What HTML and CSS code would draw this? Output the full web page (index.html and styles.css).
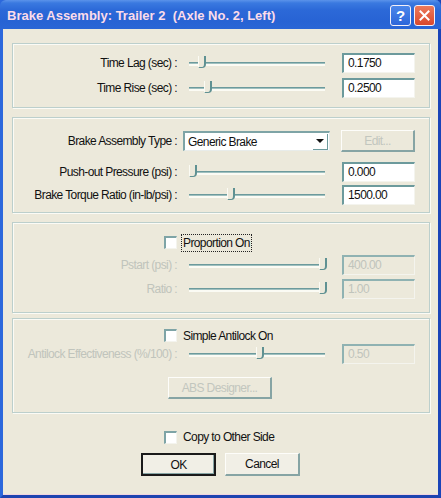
FILE: index.html
```html
<!DOCTYPE html>
<html lang="en">
<head>
  <meta charset="UTF-8">
  <title>Brake Assembly</title>
  <link rel="stylesheet" href="styles.css">
</head>
<body>

<div class="window">
  <div class="titlebar">
    <span class="title">Brake Assembly: Trailer 2&nbsp; (Axle No. 2, Left)</span>
    <div class="tb-buttons">
      <span class="tb-btn help">?</span>
      <span class="tb-btn close">
        <svg width="11" height="11" viewBox="0 0 11 11"><path d="M1.5 1.5 L9.5 9.5 M9.5 1.5 L1.5 9.5" stroke="#fff" stroke-width="2" stroke-linecap="square"/></svg>
      </span>
    </div>
  </div>

  <div class="client">

    <div class="group g1">
      <div class="row">
        <label class="lbl">Time Lag (sec) :</label>
        <div class="slider"><span class="thumb" style="left:8%"></span></div>
        <div class="field">0.1750</div>
      </div>
      <div class="row">
        <label class="lbl">Time Rise (sec) :</label>
        <div class="slider"><span class="thumb" style="left:12%"></span></div>
        <div class="field">0.2500</div>
      </div>
    </div>

    <div class="group g2">
      <div class="row combo-row">
        <label class="lbl">Brake Assembly Type :</label>
        <div class="combo">
          <span class="combo-text">Generic Brake</span>
          <span class="combo-btn"><span class="arrow"></span></span>
        </div>
        <div class="btn disabled edit">Edit...</div>
      </div>
      <div class="row">
        <label class="lbl">Push-out Pressure (psi) :</label>
        <div class="slider"><span class="thumb" style="left:2%"></span></div>
        <div class="field">0.000</div>
      </div>
      <div class="row">
        <label class="lbl">Brake Torque Ratio (in-lb/psi) :</label>
        <div class="slider"><span class="thumb" style="left:28%"></span></div>
        <div class="field">1500.00</div>
      </div>
    </div>

    <div class="group g3">
      <div class="check-row">
        <span class="checkbox"></span>
        <span class="check-label focus">Proportion On</span>
      </div>
      <div class="row dim">
        <label class="lbl">Pstart (psi) :</label>
        <div class="slider"><span class="thumb" style="left:90%"></span></div>
        <div class="field">400.00</div>
      </div>
      <div class="row dim">
        <label class="lbl">Ratio :</label>
        <div class="slider"><span class="thumb" style="left:90%"></span></div>
        <div class="field">1.00</div>
      </div>
    </div>

    <div class="group g4">
      <div class="check-row">
        <span class="checkbox"></span>
        <span class="check-label">Simple Antilock On</span>
      </div>
      <div class="row dim">
        <label class="lbl">Antilock Effectiveness (%/100) :</label>
        <div class="slider"><span class="thumb" style="left:47%"></span></div>
        <div class="field">0.50</div>
      </div>
      <div class="btn disabled abs">ABS Designer...</div>
    </div>

    <div class="footer">
      <div class="check-row">
        <span class="checkbox"></span>
        <span class="check-label">Copy to Other Side</span>
      </div>
      <div class="actions">
        <div class="btn default">OK</div>
        <div class="btn">Cancel</div>
      </div>
    </div>

  </div>
</div>

</body>
</html>
```

FILE: styles.css
```css
html, body {
  margin: 0;
  padding: 0;
}

body {
  width: 441px;
  height: 498px;
  font-family: "Liberation Sans", Arial, sans-serif;
  font-size: 12px;
  letter-spacing: -0.6px;
  color: #111;
}

.window {
  width: 441px;
  height: 498px;
  box-sizing: border-box;
  display: flex;
  flex-direction: column;
  background: #2a62d4;
  border-left: 3px solid #2c68dc;
  border-right: 3px solid #1a44b8;
  border-bottom: 3px solid #1d44b0;
}

/* title bar */
.titlebar {
  height: 29px;
  margin: 0 -3px;
  padding: 0 6px 0 7px;
  display: flex;
  align-items: center;
  justify-content: space-between;
  background: linear-gradient(#5b93ea 0, #3a79e0 3px, #2c69d8 10px, #2763d4 22px, #2a66d6 29px);
  border-radius: 6px 6px 0 0;
}

.title {
  color: #fbdcea;
  font-weight: bold;
  font-size: 13px;
  letter-spacing: 0;
  margin-top: 1px;
}

.tb-buttons {
  display: flex;
  gap: 3px;
  margin-top: 1px;
}

.tb-btn {
  width: 19px;
  height: 19px;
  border: 1px solid #f4f0f8;
  border-radius: 3px;
  display: flex;
  align-items: center;
  justify-content: center;
  color: #fff;
  font-weight: bold;
  font-size: 15px;
  letter-spacing: 0;
}

.help {
  background: linear-gradient(#4a86ea, #2d66da);
}

.close {
  background: linear-gradient(#ec7a5c, #d9482c);
}

/* client area */
.client {
  flex: 1;
  background: #ece9db;
  display: flex;
  flex-direction: column;
  border-bottom: 1px solid #f0d4e0;
}

.group {
  margin-left: 9px;
  width: 418px;
  box-sizing: border-box;
  border: 1px solid #bccfcc;
  box-shadow: inset 1px 1px 0 #fbfbf6, 1px 1px 0 #fbfbf6;
  display: flex;
  flex-direction: column;
}

.g1 {
  margin-top: 14px;
  height: 65px;
  padding-top: 9px;
  gap: 5px;
}

.g2 {
  margin-top: 9px;
  height: 96px;
  padding-top: 12px;
}

.g3 {
  margin-top: 9px;
  height: 91px;
  padding-top: 10px;
}

.g4 {
  margin-top: 5px;
  height: 95px;
  padding-top: 8px;
}

.row {
  display: flex;
  align-items: center;
  height: 20px;
}

.g2 .combo-row {
  height: 22px;
  margin-bottom: 7px;
}

.g2 .row + .row {
  margin-top: 3px;
}

.g3 .row {
  margin-top: 3px;
}

.g3 .row + .row {
  margin-top: 4px;
}

.lbl {
  width: 164px;
  text-align: right;
  white-space: nowrap;
}

.slider {
  position: relative;
  width: 148px;
  height: 20px;
  margin-left: 6px;
}

.slider::before {
  content: "";
  position: absolute;
  left: 6px;
  right: 6px;
  top: 9px;
  height: 1px;
  background: #6c9a9c;
  border-bottom: 1px solid #9fc0bf;
  box-shadow: 0 2px 0 #fbfbf4;
}

.thumb {
  position: absolute;
  top: 3px;
  width: 5px;
  height: 11px;
  margin-left: 3px;
  background: #ece9db;
  border-left: 1px solid #fbfbf4;
  border-right: 2px solid #5f9192;
  border-bottom: 1px solid #5f9192;
  border-bottom-right-radius: 4px;
}

.field {
  width: 73px;
  height: 20px;
  margin-left: 11px;
  box-sizing: border-box;
  background: #fff;
  border-top: 2px solid #6c9a9c;
  border-left: 2px solid #6c9a9c;
  border-right: 1px solid #f4f4ee;
  border-bottom: 1px solid #f4f4ee;
  padding: 1px 0 0 4px;
  line-height: 15px;
}

.dim .lbl,
.dim .field {
  color: #c0c4bc;
}

.dim .field {
  background: #ece9db;
  border-top-color: #8fb2b2;
  border-left-color: #8fb2b2;
}

/* combo */
.combo {
  width: 147px;
  height: 20px;
  margin-left: 6px;
  box-sizing: border-box;
  background: #fff;
  border-top: 2px solid #7ea4a6;
  border-left: 2px solid #7ea4a6;
  border-right: 1px solid #e8ecea;
  border-bottom: 1px solid #e8ecea;
  display: flex;
  align-items: center;
  justify-content: space-between;
}

.combo-text {
  padding-left: 3px;
}

.combo-btn {
  width: 15px;
  height: 16px;
  margin-right: 1px;
  box-sizing: border-box;
  border-right: 1px solid #6c9a9c;
  border-bottom: 1px solid #6c9a9c;
  display: flex;
  align-items: center;
  justify-content: center;
}

.arrow {
  width: 0;
  height: 0;
  border-left: 4px solid transparent;
  border-right: 4px solid transparent;
  border-top: 4px solid #111;
}

/* buttons */
.btn {
  height: 23px;
  box-sizing: border-box;
  background: #f1efe6;
  border-top: 1px solid #fdfdfa;
  border-left: 1px solid #fdfdfa;
  border-right: 2px solid #86a4a4;
  border-bottom: 2px solid #86a4a4;
  display: flex;
  align-items: center;
  justify-content: center;
}

.btn.disabled {
  color: #c2c6be;
  background: #ece9db;
}

.edit {
  width: 74px;
  height: 22px;
  margin-left: 11px;
  align-self: flex-start;
}

.abs {
  width: 104px;
  height: 22px;
  margin: 13px 0 0 155px;
}

/* checkboxes */
.check-row {
  display: flex;
  align-items: center;
  height: 17px;
  padding-left: 151px;
}

.g3 .check-row {
  height: 19px;
}

.checkbox {
  width: 13px;
  height: 13px;
  box-sizing: border-box;
  background: #fff;
  border-top: 2px solid #7ea4a6;
  border-left: 2px solid #7ea4a6;
  border-right: 1px solid #f4f4ee;
  border-bottom: 1px solid #f4f4ee;
}

.check-label {
  margin-left: 5px;
  padding: 1px 1px;
}

.check-label.focus {
  outline: 1px dotted #222;
}

/* footer */
.footer {
  display: flex;
  flex-direction: column;
}

.footer .check-row {
  margin-top: 16px;
  height: 16px;
  padding-left: 161px;
}

.actions {
  display: flex;
  gap: 9px;
  margin: 8px 0 0 138px;
}

.actions .btn {
  width: 75px;
}

.btn.default {
  border: 2px solid #1a1a1a;
  box-shadow: inset -1px -1px 0 #86a4a4;
}
```
